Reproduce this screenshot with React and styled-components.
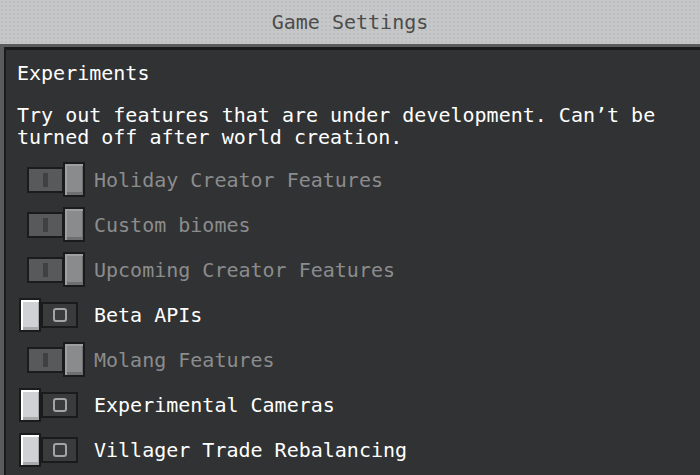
import React from "react";
import styled, { createGlobalStyle } from "styled-components";

const GlobalStyle = createGlobalStyle`
  html, body {
    margin: 0;
    padding: 0;
    background: #313233;
  }
  body {
    font-family: "DejaVu Sans Mono", "Liberation Mono", monospace;
    font-size: 20px;
    line-height: 22px;
    color: #ffffff;
  }
`;

const Page = styled.div`
  width: 700px;
  height: 475px;
  overflow: hidden;
  display: flex;
  flex-direction: column;
`;

const Header = styled.div`
  height: 44px;
  flex: none;
  display: flex;
  align-items: center;
  justify-content: center;
  background-color: #c6c7c8;
  background-image: radial-gradient(rgba(0, 0, 0, 0.05) 1px, transparent 1px);
  background-size: 4px 4px;
  color: #4c4c4c;
`;

const Frame = styled.div`
  flex: 1;
  display: flex;
  border-top: 3px solid #5a5b5c;
  border-left: 4px solid #5a5b5c;
`;

const Panel = styled.div`
  flex: 1;
  border-top: 3px solid #1b1b1c;
  border-left: 2px solid #1b1b1c;
  background: #313233;
  padding: 12px 0 0 11px;
`;

const Title = styled.div`
  margin-bottom: 20px;
`;

const Description = styled.p`
  margin: 0 0 9px;
  width: 650px;
`;

const List = styled.div`
  display: flex;
  flex-direction: column;
`;

const Row = styled.div`
  height: 45px;
  display: flex;
  align-items: center;
  gap: 9px;
  padding-left: 2px;
`;

const Label = styled.span`
  color: ${(p) => (p.$disabled ? "#8b8c8d" : "#ffffff")};
`;

const Toggle = styled.div`
  width: 66px;
  height: 35px;
  display: flex;
  align-items: center;
  justify-content: ${(p) => (p.$on ? "flex-end" : "flex-start")};
`;

const Track = styled.div`
  width: 37px;
  height: 26px;
  box-sizing: border-box;
  display: flex;
  align-items: center;
  justify-content: center;
  border: 2px solid #1b1b1c;
  background: ${(p) => (p.$disabled ? "#58595a" : "#3a3b3c")};
  ${(p) => (p.$on ? "margin-right: -1px;" : "")}
`;

const Bar = styled.div`
  width: 5px;
  height: 14px;
  background: #404142;
`;

const Ring = styled.div`
  width: 14px;
  height: 14px;
  box-sizing: border-box;
  border: 2px solid #a3a4a6;
  border-radius: 3px;
`;

const Knob = styled.div`
  width: 22px;
  height: ${(p) => (p.$disabled ? "35px" : "34px")};
  box-sizing: border-box;
  border: 2px solid #1b1b1c;
  background: ${(p) => (p.$disabled ? "#8a8b8c" : "#d0d1d4")};
  box-shadow: ${(p) =>
    p.$disabled
      ? "inset 2px 2px 0 #9e9fa0, inset -1px -3px 0 #6e6f70"
      : "inset 2px 2px 0 #ffffff, inset -1px -3px 0 #a8a9ac"};
`;

function Switch({ on, disabled }) {
  if (on) {
    return (
      <Toggle $on>
        <Track $on $disabled={disabled}>
          <Bar />
        </Track>
        <Knob $disabled={disabled} />
      </Toggle>
    );
  }
  return (
    <Toggle>
      <Knob $disabled={disabled} />
      <Track $disabled={disabled}>
        <Ring />
      </Track>
    </Toggle>
  );
}

const experiments = [
  { label: "Holiday Creator Features", on: true, disabled: true },
  { label: "Custom biomes", on: true, disabled: true },
  { label: "Upcoming Creator Features", on: true, disabled: true },
  { label: "Beta APIs", on: false, disabled: false },
  { label: "Molang Features", on: true, disabled: true },
  { label: "Experimental Cameras", on: false, disabled: false },
  { label: "Villager Trade Rebalancing", on: false, disabled: false },
];

export default function App() {
  return (
    <Page>
      <GlobalStyle />
      <Header>Game Settings</Header>
      <Frame>
        <Panel>
          <Title>Experiments</Title>
          <Description>
            Try out features that are under development. Can’t be turned off
            after world creation.
          </Description>
          <List>
            {experiments.map((e) => (
              <Row key={e.label}>
                <Switch on={e.on} disabled={e.disabled} />
                <Label $disabled={e.disabled}>{e.label}</Label>
              </Row>
            ))}
          </List>
        </Panel>
      </Frame>
    </Page>
  );
}
